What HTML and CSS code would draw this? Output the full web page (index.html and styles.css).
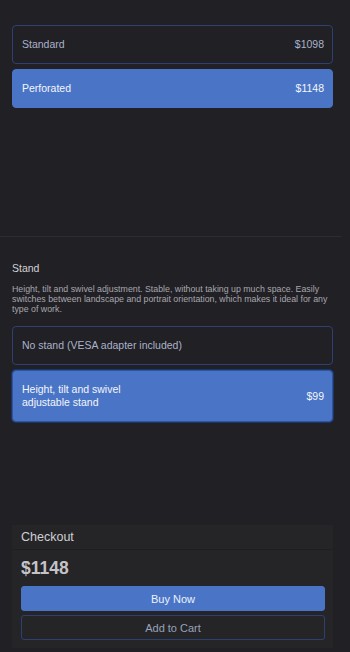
FILE: index.html
```html
<!DOCTYPE html>
<html>
<head>
<meta charset="utf-8">
<link rel="stylesheet" href="styles.css">
</head>
<body>
<div class="page">
  <section class="finish">
    <div class="option">
      <span class="label">Standard</span>
      <span class="price">$1098</span>
    </div>
    <div class="option selected">
      <span class="label">Perforated</span>
      <span class="price">$1148</span>
    </div>
  </section>
  <hr class="divider">
  <section class="stand">
    <h2 class="title">Stand</h2>
    <p class="desc">Height, tilt and swivel adjustment. Stable, without taking up much space. Easily switches between landscape and portrait orientation, which makes it ideal for any type of work.</p>
    <div class="options">
      <div class="option">
        <span class="label">No stand (VESA adapter included)</span>
      </div>
      <div class="option selected focused">
        <span class="label narrow">Height, tilt and swivel adjustable stand</span>
        <span class="price">$99</span>
      </div>
    </div>
  </section>
  <section class="checkout">
    <div class="checkout-head">Checkout</div>
    <div class="checkout-body">
      <div class="total">$1148</div>
      <button class="btn primary">Buy Now</button>
      <button class="btn secondary">Add to Cart</button>
    </div>
  </section>
</div>
</body>
</html>
```
FILE: styles.css
```css
* { box-sizing: border-box; }
html, body {
  margin: 0;
  background: #212025;
}
body {
  font-family: "Liberation Sans", Arial, sans-serif;
  color: #d0d0d4;
  width: 350px;
  height: 652px;
  overflow: hidden;
}
.page {
  display: flex;
  flex-direction: column;
}
.finish {
  padding: 25px 17px 0 12px;
  display: flex;
  flex-direction: column;
  gap: 5px;
  height: 236px;
}
.option {
  display: flex;
  align-items: center;
  justify-content: space-between;
  border: 1px solid #2c4172;
  border-radius: 4px;
  padding: 12px 8px 12px 9px;
  min-height: 39px;
  font-size: 10.5px;
  line-height: 13px;
  color: #a9b3ca;
}
.option.selected {
  background: #4a75c7;
  border-color: #4a75c7;
  color: #f4f6fb;
}
.option.focused {
  border-color: #2f54a0;
  box-shadow: 0 0 0 1px #1d3566;
}
.label.narrow {
  max-width: 130px;
}
.divider {
  margin: 0;
  border: 0;
  height: 1px;
  width: 342px;
  background: #2b2b31;
}
.stand {
  padding: 25px 17px 0 12px;
  height: 288px;
}
.title {
  margin: 0;
  font-size: 10.5px;
  line-height: 13px;
  font-weight: normal;
  color: #d2d2d6;
}
.desc {
  margin: 9px 0 12px;
  font-size: 8.8px;
  line-height: 10px;
  color: #a7a7ad;
}
.options {
  display: flex;
  flex-direction: column;
  gap: 5px;
}
.options .focused {
  margin-top: 0;
  min-height: 52px;
}
.checkout {
  margin: 0 17px 0 12px;
  background: #252528;
  display: flex;
  flex-direction: column;
}
.checkout-head {
  padding: 5px 9px 4px;
  font-size: 12.5px;
  line-height: 15px;
  color: #cfcfd3;
  border-bottom: 1px solid #1f1f22;
}
.checkout-body {
  padding: 8px 8px 8px 9px;
  display: flex;
  flex-direction: column;
  gap: 4px;
}
.total {
  font-size: 17.5px;
  line-height: 20px;
  font-weight: bold;
  color: #c4c4c8;
  margin-bottom: 4px;
}
.btn {
  font-family: "Liberation Sans", Arial, sans-serif;
  font-size: 11px;
  height: 25px;
  border-radius: 3px;
  width: 100%;
}
.btn.primary {
  background: #4a75c7;
  border: 1px solid #4a75c7;
  color: #eef2fa;
}
.btn.secondary {
  background: transparent;
  border: 1px solid #2c4172;
  color: #97a2bb;
}
```
